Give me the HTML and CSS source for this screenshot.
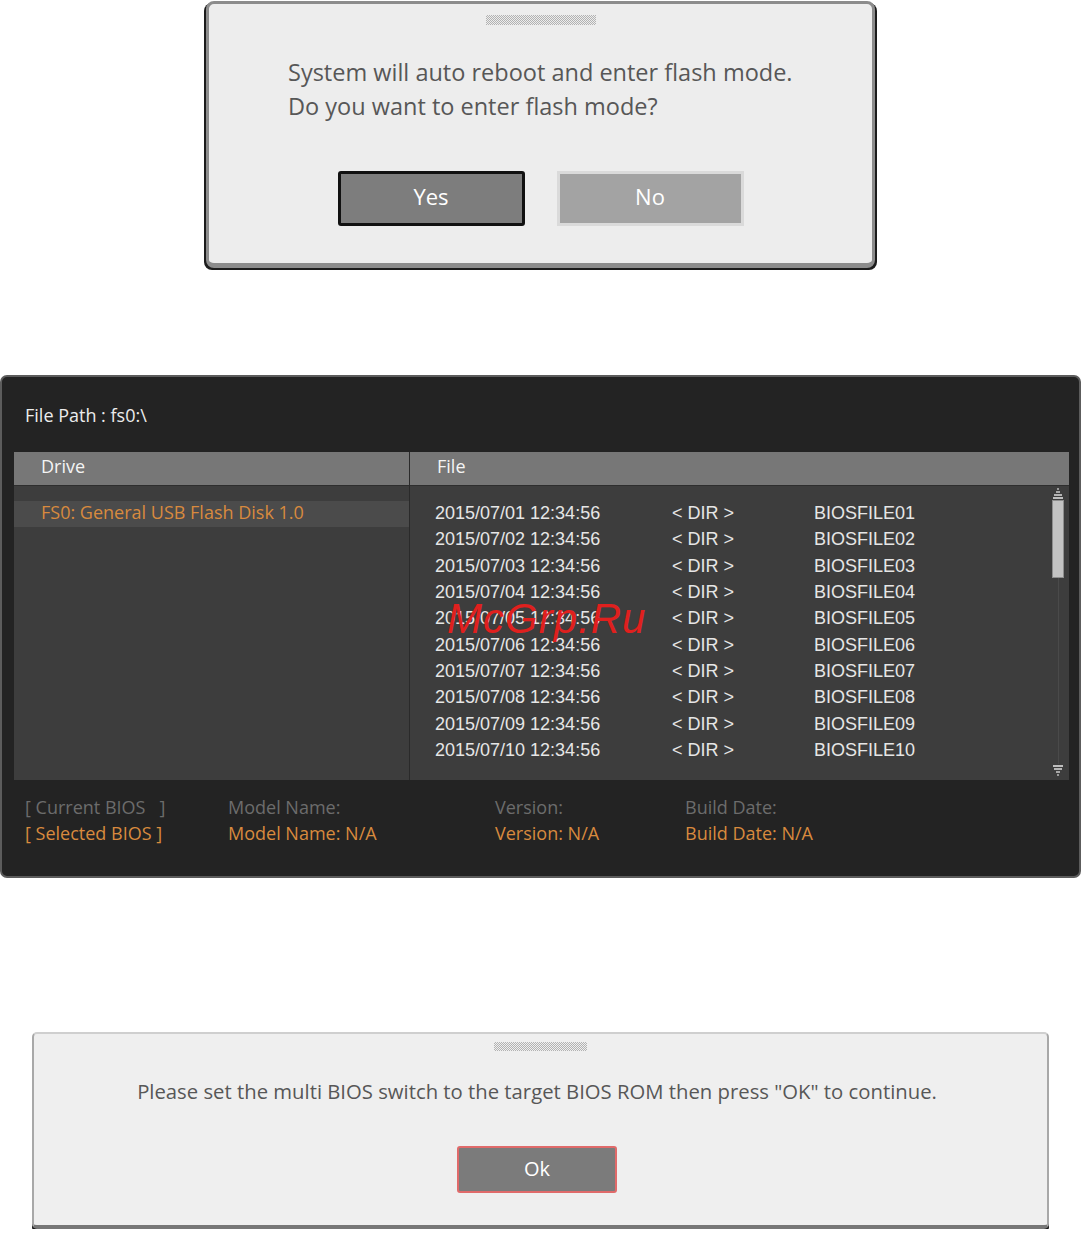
FILE: index.html
```html
<!DOCTYPE html>
<html lang="en">
<head>
    <meta charset="UTF-8">
    <meta name="viewport" content="width=device-width, initial-scale=1.0">
    <title>BIOS Flash</title>
    <link rel="stylesheet" href="styles.css">
</head>
<body>
    <div class="dialog dialog-flash">
        <div class="grip"></div>
        <p class="msg">System will auto reboot and enter flash mode.<br>Do you want to enter flash mode?</p>
        <div class="buttons">
            <div class="btn btn-yes">Yes</div>
            <div class="btn btn-no">No</div>
        </div>
    </div>

    <div class="panel">
        <div class="path">File Path : fs0:\</div>
        <div class="table">
            <div class="col col-drive">
                <div class="col-head">Drive</div>
                <div class="col-body drive-body">
                    <div class="drive selected">FS0: General USB Flash Disk 1.0</div>
                </div>
            </div>
            <div class="col col-file">
                <div class="col-head">File</div>
                <div class="col-body file-body">
                    <div class="files" id="files"></div>
                    <div class="scroll">
                        <svg class="arrow" width="12" height="12" viewBox="0 0 12 12">
                            <rect x="5" y="0" width="2" height="2" fill="#9a9a9a"/>
                            <rect x="4" y="3" width="4" height="2" fill="#a8a8a8"/>
                            <rect x="2" y="6" width="8" height="2" fill="#b4b4b4"/>
                            <rect x="1" y="9" width="10" height="2" fill="#bebebe"/>
                        </svg>
                        <div class="thumb"></div>
                        <div class="track"></div>
                        <svg class="arrow" width="12" height="12" viewBox="0 0 12 12">
                            <rect x="1" y="1" width="10" height="2" fill="#bebebe"/>
                            <rect x="2" y="4" width="8" height="2" fill="#b4b4b4"/>
                            <rect x="4" y="7" width="4" height="2" fill="#a8a8a8"/>
                            <rect x="5" y="10" width="2" height="2" fill="#9a9a9a"/>
                        </svg>
                    </div>
                </div>
            </div>
        </div>
        <div class="info">
            <span class="dim">[ Current BIOS &nbsp;&nbsp;]</span>
            <span class="dim">Model Name:</span>
            <span class="dim">Version:</span>
            <span class="dim">Build Date:</span>
            <span class="sel">[ Selected BIOS ]</span>
            <span class="sel">Model Name: N/A</span>
            <span class="sel">Version: N/A</span>
            <span class="sel">Build Date: N/A</span>
        </div>
        <div class="watermark">McGrp.Ru</div>
    </div>

    <div class="dialog dialog-switch">
        <div class="grip"></div>
        <p class="msg">Please set the multi BIOS switch to the target BIOS ROM then press "OK" to continue.</p>
        <div class="buttons">
            <div class="btn btn-ok">Ok</div>
        </div>
    </div>

    <script>
    document.addEventListener('DOMContentLoaded', function() {
        let list = document.getElementById('files');
        for (let i = 1; i <= 10; i++) {
            let n = i < 10 ? '0' + i : '' + i;
            let row = document.createElement('div');
            row.className = 'file-row';
            row.innerHTML = '<span>2015/07/' + n + ' 12:34:56</span><span>&lt; DIR &gt;</span><span>BIOSFILE' + n + '</span>';
            list.appendChild(row);
        }
    });
    </script>
</body>
</html>
```

FILE: styles.css
```css
body {
    margin: 0;
    background: #fff;
    font-family: "Open Sans", sans-serif;
}

.dialog {
    box-sizing: border-box;
    display: flex;
    flex-direction: column;
    background: #ededed;
    border: 3px solid #8c8c8c;
    border-bottom-width: 5px;
    border-radius: 8px;
}

.grip {
    align-self: center;
    background: conic-gradient(#b2b2b2 25%, transparent 0 50%, #b2b2b2 0 75%, transparent 0) 0 0 / 2px 2px;
}

.msg {
    margin: 0;
    color: #575757;
}

.buttons {
    display: flex;
    justify-content: center;
    gap: 32px;
}

.btn {
    box-sizing: border-box;
    display: flex;
    align-items: center;
    justify-content: center;
    color: #fff;
}

/* first dialog */
.dialog-flash {
    margin: 1px 0 0 206px;
    width: 669px;
    height: 267px;
    box-shadow: -2px 2px 0 #1c1c1c, 2px 2px 0 #1c1c1c;
}

.dialog-flash .grip {
    width: 110px;
    height: 10px;
    margin-top: 11px;
}

.dialog-flash .msg {
    margin: 30px 0 0 79px;
    font-size: 23.5px;
    line-height: 34px;
}

.dialog-flash .buttons {
    margin-top: 48px;
}

.btn-yes, .btn-no {
    width: 187px;
    height: 55px;
    padding-bottom: 5px;
    font-size: 22px;
}

.btn-yes {
    background: #7d7d7d;
    border: 3px solid #111;
    border-radius: 3px;
}

.btn-no {
    background: #a3a3a3;
    border: 3px solid #dadada;
}

/* file browser */
.panel {
    position: relative;
    box-sizing: border-box;
    margin-top: 107px;
    width: 1081px;
    height: 503px;
    padding: 0 10px 0 12px;
    background: #232323;
    border: 2px solid #5c5c5c;
    border-radius: 7px;
    font-size: 18px;
}

.path {
    padding: 27px 0 0 11px;
    margin-bottom: 26px;
    line-height: 22px;
    color: #ececec;
}

.table {
    display: flex;
}

.col-drive {
    width: 395px;
    border-right: 1px solid #2a2a2a;
}

.col-file {
    flex: 1;
}

.col-head {
    height: 33px;
    padding-left: 27px;
    line-height: 29px;
    background: #777;
    color: #f4f4f4;
    border-bottom: 1px solid #2e2e2e;
}

.col-body {
    height: 294px;
    background: #3d3d3d;
}

.drive-body {
    padding-top: 15px;
    box-sizing: border-box;
}

.drive {
    height: 26px;
    padding-left: 27px;
    line-height: 23px;
}

.drive.selected {
    background: #4b4b4b;
    color: #d88a3e;
}

.file-body {
    display: flex;
}

.files {
    flex: 1;
    padding: 14px 0 0 25px;
    font-family: "Liberation Sans", Arial, sans-serif;
    font-size: 18px;
    color: #e6e6e6;
}

.file-row {
    display: grid;
    grid-template-columns: 237px 142px 1fr;
    height: 26.33px;
    line-height: 26.33px;
}

.scroll {
    display: flex;
    flex-direction: column;
    align-items: center;
    width: 12px;
    margin-right: 5px;
    padding: 2px 0 4px;
}

.thumb {
    box-sizing: border-box;
    width: 12px;
    height: 78px;
    background: #c3c3c3;
    border: 1px solid #8e8e8e;
}

.track {
    flex: 1;
    width: 1px;
    background: #4a4a4a;
}

.info {
    display: grid;
    grid-template-columns: 203px 267px 190px 1fr;
    padding: 14px 0 0 11px;
    line-height: 26px;
}

.dim {
    color: #6c6c6c;
}

.sel {
    color: #d88a3e;
}

.watermark {
    position: absolute;
    left: 445px;
    top: 221px;
    font-family: "Liberation Sans", Arial, sans-serif;
    font-style: italic;
    font-size: 42px;
    line-height: 42px;
    letter-spacing: 1px;
    color: #e0201e;
}

/* switch dialog */
.dialog-switch {
    margin: 154px 0 0 32px;
    width: 1017px;
    height: 197px;
    background: #efefef;
    border: 2px solid #a8a8a8;
    border-top-color: #cfcfcf;
    border-bottom: 4px solid #777;
    border-radius: 5px;
    box-shadow: 0 3px 0 #151515;
}

.dialog-switch .grip {
    width: 93px;
    height: 9px;
    margin-top: 8px;
}

.dialog-switch .msg {
    margin-top: 26px;
    padding-right: 7px;
    text-align: center;
    font-size: 20.3px;
    line-height: 28px;
}

.dialog-switch .buttons {
    margin-top: 41px;
    padding-right: 7px;
}

.btn-ok {
    width: 160px;
    height: 47px;
    padding-bottom: 2px;
    font-size: 20px;
    background: #7b7b7b;
    border: 2px solid #e06a6a;
    border-radius: 3px;
}
```
